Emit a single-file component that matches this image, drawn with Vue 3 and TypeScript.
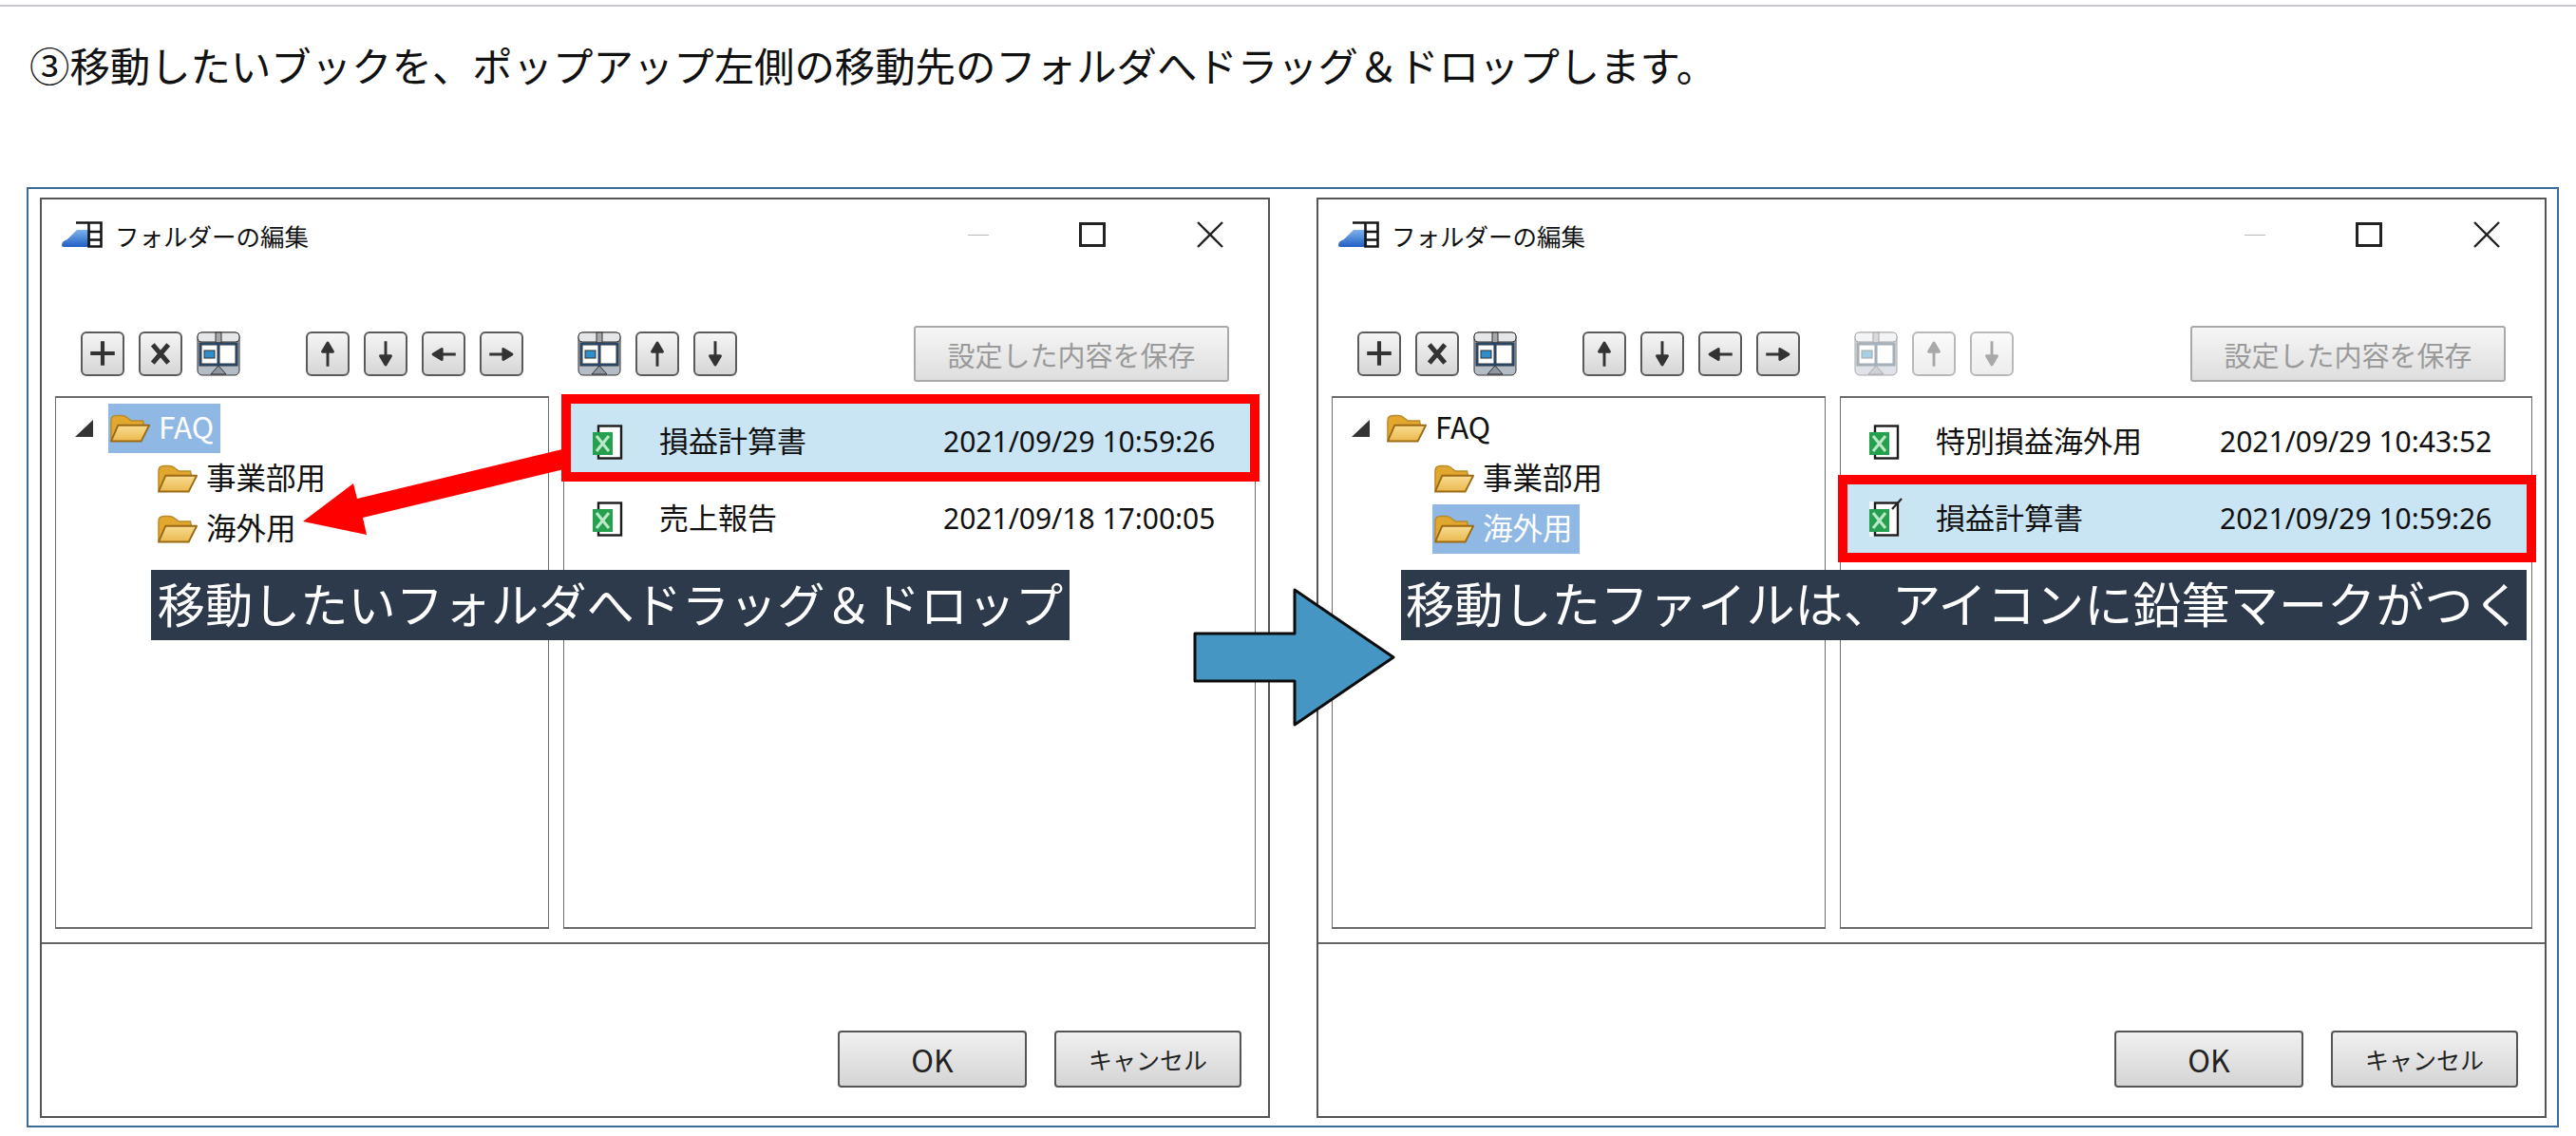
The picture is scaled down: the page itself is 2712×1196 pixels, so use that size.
<template>
  <div class="page">
    <svg class="defs" aria-hidden="true">
      <defs>
        <linearGradient id="g-blue" x1="0" y1="0" x2="0" y2="1">
          <stop offset="0" stop-color="#7fb2ec" />
          <stop offset="1" stop-color="#1f5fc4" />
        </linearGradient>
        <linearGradient id="g-folder" x1="0" y1="0" x2="0" y2="1">
          <stop offset="0" stop-color="#f8dc92" />
          <stop offset="1" stop-color="#ebb94f" />
        </linearGradient>
        <symbol id="i-folder" viewBox="0 0 45 31">
          <path d="M1 29V7Q1 1 7 1H13Q17 1 20 4L24 7H37L38 12H9Z" fill="#e2a72e" stroke="#b98a2a" stroke-width="1.5" />
          <path d="M1 30L9 12H44L35 30Z" fill="url(#g-folder)" stroke="#9c6a14" stroke-width="2" stroke-linejoin="round" />
        </symbol>
        <symbol id="i-book" viewBox="0 0 32 37">
          <rect x="6" y="1.5" width="24" height="34" fill="#fff" stroke="#1c1c1c" stroke-width="2.4" />
          <rect x="0" y="8" width="21" height="24" fill="#24a04f" />
          <path d="M4 12L17 28M17 12L4 28" stroke="#bfe8cb" stroke-width="3" />
        </symbol>
        <symbol id="i-app" viewBox="0 0 43 28">
          <path d="M0 25Q0 21 6 19Q11 14 16 9H30V27H3Q0 27 0 25Z" fill="url(#g-blue)" />
          <path d="M15 1.5H41.5V26.5H28.5V1.5M28.5 11H41.5M28.5 19.5H41.5" fill="none" stroke="#161616" stroke-width="2.6" />
        </symbol>
      </defs>
    </svg>

    <div class="rule"></div>
    <p class="lead">③移動したいブックを、ポップアップ左側の移動先のフォルダへドラッグ＆ドロップします。</p>

    <div class="frame">
      <section v-for="(dlg, d) in dialogs" :key="d" class="dialog">
        <header class="titlebar">
          <svg class="app-icon"><use href="#i-app" /></svg>
          <span class="title">フォルダーの編集</span>
          <span class="win-min"></span>
          <span class="win-max"></span>
          <svg class="win-close" viewBox="0 0 30 28">
            <path d="M2 1L28 27M28 1L2 27" stroke="#222" stroke-width="2.4" fill="none" />
          </svg>
        </header>

        <div class="toolbar">
          <div v-for="(group, g) in toolGroups" :key="g" class="tool-group" :class="{ off: g === 2 && dlg.listLocked }">
            <template v-for="tool in group" :key="tool">
              <span v-if="tool === 'pane'" class="tool pane">
                <svg viewBox="0 0 46 47">
                  <rect x="1" y="1" width="44" height="45" rx="5" fill="#b4bcc6" />
                  <rect x="1" y="1" width="44" height="10" rx="4" fill="#e4e6e8" />
                  <rect x="20" y="1" width="6" height="11" fill="#a8a8a8" />
                  <rect x="3" y="12" width="40" height="24" fill="#1c5a9c" />
                  <rect x="5" y="14" width="17" height="20" fill="#fff" />
                  <rect x="24" y="14" width="17" height="20" fill="#fff" />
                  <rect x="8" y="20" width="11" height="8" fill="#2f8fc9" />
                  <path d="M23 36L15 45H31Z" fill="#8f97a2" />
                </svg>
              </span>
              <button v-else class="tool" type="button">
                <svg viewBox="0 0 46 47">
                  <path :d="icons[tool]" :stroke-width="tool === 'x' ? 5.5 : tool === 'plus' ? 4.5 : 3.2" stroke-linejoin="round" />
                </svg>
              </button>
            </template>
          </div>
          <button class="save" type="button">設定した内容を保存</button>
        </div>

        <div class="panes">
          <div class="tree">
            <div v-for="node in dlg.tree" :key="node.name" class="node" :class="{ child: !node.root }">
              <span v-if="node.root" class="twist"></span>
              <span class="node-label" :class="{ active: node.active }">
                <svg class="folder"><use href="#i-folder" /></svg>
                <span class="node-name">{{ node.name }}</span>
              </span>
            </div>
          </div>

          <div class="list">
            <div v-for="row in dlg.files" :key="row.name" class="file" :class="{ active: row.active }">
              <span class="book" :class="{ edited: row.edited }">
                <svg><use href="#i-book" /></svg>
                <svg v-if="row.edited" class="pencil" viewBox="0 0 16 16">
                  <path d="M3 14L13 3" stroke="#222" stroke-width="2.2" />
                </svg>
              </span>
              <span class="file-name">{{ row.name }}</span>
              <span class="file-date">{{ row.date }}</span>
              <span v-if="row.active" class="mark"></span>
            </div>
          </div>
        </div>

        <footer class="footer">
          <button class="ok" type="button">OK</button>
          <button class="cancel" type="button">キャンセル</button>
        </footer>

        <div class="caption" :class="dlg.captionClass">{{ dlg.caption }}</div>
      </section>

      <svg class="arrows" viewBox="30 199 2660 985">
        <path d="M592 473L376 525L372 509L319 549L386 563L382 545L598 493Z" fill="#fe0000" />
        <path d="M1258 667H1363V621L1467 692L1363 763V717H1258Z" fill="#4596c2" stroke="#0c0c0c" stroke-width="3" stroke-linejoin="round" />
      </svg>
    </div>
  </div>
</template>

<script setup lang="ts">
interface TreeNode { name: string; root?: boolean; active?: boolean }
interface FileRow { name: string; date: string; active?: boolean; edited?: boolean }
interface Dialog {
  tree: TreeNode[]
  files: FileRow[]
  listLocked: boolean
  caption: string
  captionClass: string
}

const icons: Record<string, string> = {
  plus: 'M23 9V37M9 23H37',
  x: 'M14 13L32 34M32 13L14 34',
  up: 'M23 38V20M17 21L23 11L29 21Z',
  down: 'M23 9V27M17 26L23 36L29 26Z',
  left: 'M37 24H20M21 18L11 24L21 30Z',
  right: 'M9 24H26M25 18L35 24L25 30Z',
}

const toolGroups: string[][] = [
  ['plus', 'x', 'pane'],
  ['up', 'down', 'left', 'right'],
  ['pane', 'up', 'down'],
]

const dialogs: Dialog[] = [
  {
    tree: [
      { name: 'FAQ', root: true, active: true },
      { name: '事業部用' },
      { name: '海外用' },
    ],
    files: [
      { name: '損益計算書', date: '2021/09/29 10:59:26', active: true },
      { name: '売上報告', date: '2021/09/18 17:00:05' },
    ],
    listLocked: false,
    caption: '移動したいフォルダへドラッグ＆ドロップ',
    captionClass: 'caption-a',
  },
  {
    tree: [
      { name: 'FAQ', root: true },
      { name: '事業部用' },
      { name: '海外用', active: true },
    ],
    files: [
      { name: '特別損益海外用', date: '2021/09/29 10:43:52' },
      { name: '損益計算書', date: '2021/09/29 10:59:26', active: true, edited: true },
    ],
    listLocked: true,
    caption: '移動したファイルは、アイコンに鉛筆マークがつく',
    captionClass: 'caption-b',
  },
]
</script>

<style>
body { margin: 0; background: #fff; }
</style>

<style scoped>
.page { width: 2712px; height: 1196px; overflow: hidden; font-family: "Noto Sans CJK JP", "Noto Sans", sans-serif; color: #111; }
.defs { position: absolute; width: 0; height: 0; }
.rule { height: 2px; margin-top: 5px; background: #c6c6cc; }
.lead { margin: 0; padding-left: 31px; font-size: 42.4px; line-height: 122px; white-space: nowrap; }

.frame {
  position: relative;
  box-sizing: border-box;
  display: flex;
  gap: 49px;
  width: 2666px;
  height: 990px;
  margin: 68px 0 0 28px;
  padding: 9px 0 0 12px;
  border: 2px solid #3b6b9d;
}
.dialog {
  position: relative;
  box-sizing: border-box;
  display: flex;
  flex-direction: column;
  width: 1295px;
  height: 969px;
  border: 2px solid #555;
}

.titlebar { display: flex; align-items: center; height: 74px; padding-left: 21px; }
.app-icon { width: 43px; height: 28px; margin-right: 13px; }
.title { font-size: 25.5px; white-space: nowrap; }
.win-min { width: 22px; height: 1px; margin-left: auto; background: #b8b8b8; }
.win-max { box-sizing: border-box; width: 28px; height: 26px; margin-left: 95px; border: 3px solid #222; }
.win-close { width: 30px; height: 28px; margin: 0 46px 0 95px; }

.toolbar { display: flex; align-items: center; height: 59px; margin-top: 59px; padding: 0 41px; }
.tool-group { display: flex; gap: 15px; }
.tool-group:nth-child(2) { margin-left: 69px; }
.tool-group:nth-child(3) { margin-left: 57px; }
.tool-group.off { opacity: 0.42; }
.tool {
  box-sizing: border-box;
  width: 46px;
  height: 47px;
  padding: 0;
  border: 2px solid #5b5b5b;
  border-radius: 6px;
  background: linear-gradient(#f5f5f5, #d6d6d6);
}
.tool svg { display: block; width: 100%; height: 100%; fill: #333; stroke: #333; }
.tool.pane { border: 0; background: none; }
.save {
  box-sizing: border-box;
  width: 332px;
  height: 59px;
  margin-left: auto;
  border: 2px solid #a9a9a9;
  border-radius: 3px;
  background: linear-gradient(#f6f6f6, #dedede);
  font: 29px "Noto Sans CJK JP", sans-serif;
  color: #9a9a9a;
}

.panes { display: flex; gap: 15px; height: 561px; margin-top: 15px; padding: 0 13px 0 14px; }
.tree, .list { box-sizing: border-box; border: 2px solid #6c6c6c; border-width: 2px 1px 2px 1px; }
.tree { width: 520px; padding-top: 5px; }
.list { flex: 1; padding: 6px 5px 0 7px; }

.node { display: flex; align-items: center; height: 53px; padding-left: 20px; font-size: 31.5px; }
.node.child { padding-left: 105px; }
.twist { width: 0; height: 0; margin-right: 16px; border-style: solid; border-width: 0 0 18px 19px; border-color: transparent transparent #333 transparent; }
.node-label { display: flex; align-items: center; gap: 9px; height: 52px; padding: 0 7px 0 2px; }
.node-label.active { background: #8fb9e4; color: #fff; }
.node-name { margin-bottom: 5px; }
.folder { width: 42px; height: 30px; }

.file {
  position: relative;
  display: grid;
  grid-template-columns: 70px 299px auto;
  align-items: center;
  height: 72px;
  margin-bottom: 13px;
  padding-left: 23px;
  box-sizing: border-box;
}
.file:first-child { padding-top: 8px; }
.file.active { background: #c9e4f3; }
.book { position: relative; display: block; width: 32px; height: 37px; }
.book > svg:first-child { display: block; width: 32px; height: 37px; }
.pencil { position: absolute; top: -6px; right: -5px; width: 16px; height: 16px; }
.book.edited { background: #eef6fb; }
.file-name { margin-bottom: 5px; font-size: 31px; white-space: nowrap; }
.file-date { margin-bottom: 2px; font-family: "Noto Sans", sans-serif; font-size: 30px; white-space: nowrap; }
.mark { position: absolute; inset: -10px; border: 10px solid #fe0000; pointer-events: none; }

.footer {
  flex: 1;
  display: flex;
  align-items: flex-end;
  justify-content: flex-end;
  gap: 29px;
  margin-top: 14px;
  padding: 0 28px 30px 0;
  border-top: 2px solid #666;
}
.ok, .cancel {
  box-sizing: border-box;
  height: 60px;
  border: 2px solid #555;
  border-radius: 4px;
  background: linear-gradient(#f0f0f0, #d4d4d4);
  font-family: "Noto Sans CJK JP", sans-serif;
  color: #222;
}
.ok { width: 199px; font-size: 32px; }
.cancel { width: 197px; font-size: 25px; }

.caption {
  position: absolute;
  top: 390px;
  box-sizing: border-box;
  display: flex;
  align-items: center;
  justify-content: center;
  height: 74px;
  padding-bottom: 6px;
  background: #2c3a4b;
  color: #fff;
  white-space: nowrap;
}
.caption-a { left: 115px; width: 967px; font-size: 50.2px; }
.caption-b { left: 87px; width: 1185px; font-size: 51.2px; }

.arrows { position: absolute; left: 0; top: 0; width: 2660px; height: 985px; pointer-events: none; }
</style>
